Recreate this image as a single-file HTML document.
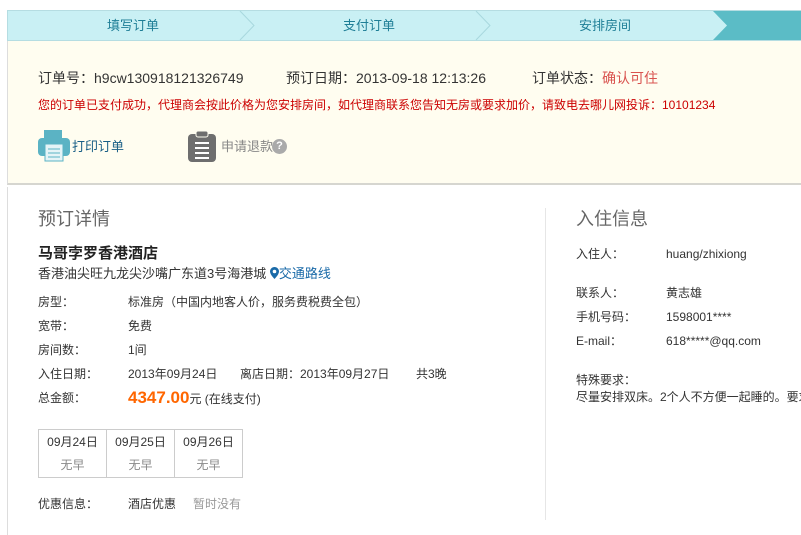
<!DOCTYPE html>
<html><head><meta charset="utf-8"><style>
*{margin:0;padding:0;box-sizing:border-box}
body{width:801px;height:535px;background:#fff;font-family:"Liberation Sans","Noto Sans CJK SC",sans-serif;font-size:12px;color:#333;position:relative;overflow:hidden}
.a{position:absolute;white-space:nowrap;line-height:16px}
</style></head><body>
<div class="a" style="left:7px;top:10px;width:794px;height:31px;background:#c9f0f4;border:1px solid #b5dde2;border-right:none"></div>
<svg class="a" style="left:0;top:10px" width="801" height="31">
<polyline points="240,1 254,15.5 240,30" fill="none" stroke="#a8d8de" stroke-width="1"/>
<polyline points="476,1 490,15.5 476,30" fill="none" stroke="#a8d8de" stroke-width="1"/>
<polygon points="713,1 801,1 801,30 713,30 727,15.5" fill="#5bbcc6"/>
</svg>
<div class="a" style="left:107px;top:18px;color:#1e7e96;font-size:13px">填写订单</div>
<div class="a" style="left:343px;top:18px;color:#1e7e96;font-size:13px">支付订单</div>
<div class="a" style="left:579px;top:18px;color:#1e7e96;font-size:13px">安排房间</div>
<div class="a" style="left:7px;top:41px;width:794px;height:144px;background:#fffdf0;border-left:1px solid #ddd;border-bottom:2px solid #d6d6d0"></div>
<div class="a" style="left:38px;top:70px;font-size:14px">订单号：h9cw130918121326749</div>
<div class="a" style="left:286px;top:70px;font-size:14px">预订日期：2013-09-18 12:13:26</div>
<div class="a" style="left:532px;top:70px;font-size:14px">订单状态：<span style="color:#d9534f">确认可住</span></div>
<div class="a" style="left:38px;top:97px;font-size:12px;color:#c00">您的订单已支付成功，代理商会按此价格为您安排房间，如代理商联系您告知无房或要求加价，请致电去哪儿网投诉：10101234</div>
<svg class="a" style="left:38px;top:129px" width="32" height="33"><rect x="6" y="1" width="18" height="8" fill="#5bb3c4"/><rect x="0" y="9" width="32" height="18" rx="4" fill="#5bb3c4"/><rect x="7" y="15" width="18" height="17" fill="#e5f4f7" stroke="#5bb3c4"/><line x1="10" y1="20" x2="22" y2="20" stroke="#5bb3c4"/><line x1="10" y1="24" x2="22" y2="24" stroke="#5bb3c4"/><line x1="10" y1="28" x2="22" y2="28" stroke="#5bb3c4"/></svg>
<div class="a" style="left:72px;top:139px;color:#1a5f86;font-size:13px">打印订单</div>
<svg class="a" style="left:188px;top:130px" width="28" height="32"><rect x="0" y="4" width="28" height="28" rx="4" fill="#6e6e6e"/><rect x="8" y="1" width="12" height="6" rx="2" fill="#6e6e6e" stroke="#fffdf0"/><g stroke="#fff" stroke-width="2"><line x1="7" y1="13" x2="21" y2="13"/><line x1="7" y1="18" x2="21" y2="18"/><line x1="7" y1="23" x2="21" y2="23"/><line x1="7" y1="28" x2="21" y2="28"/></g></svg>
<div class="a" style="left:221px;top:139px;color:#888;font-size:13px">申请退款</div>
<div class="a" style="left:272px;top:139px;width:15px;height:15px;border-radius:50%;background:#aaa;color:#fff;font-size:11px;font-weight:bold;text-align:center;line-height:15px">?</div>
<div class="a" style="left:7px;top:187px;width:1px;height:348px;background:#ddd"></div>
<div class="a" style="left:545px;top:208px;width:1px;height:312px;background:#e6e6e6"></div>
<div class="a" style="left:38px;top:208px;font-size:18px;line-height:22px;color:#666">预订详情</div>
<div class="a" style="left:38px;top:246px;font-size:15px;font-weight:bold;color:#222">马哥孛罗香港酒店</div>
<div class="a" style="left:38px;top:266px;font-size:13px">香港油尖旺九龙尖沙嘴广东道3号海港城 <svg width="9" height="12" viewBox="0 0 9 12" style="vertical-align:-1px"><path d="M4.5 0C2 0 0 2 0 4.5 0 7.5 4.5 12 4.5 12S9 7.5 9 4.5C9 2 7 0 4.5 0z" fill="#1a6aa8"/><circle cx="4.5" cy="4.5" r="1.8" fill="#fff"/></svg><span style="color:#1a6aa8">交通路线</span></div>
<div class="a" style="left:38px;top:294px">房型：</div><div class="a" style="left:128px;top:294px">标准房（中国内地客人价，服务费税费全包）</div>
<div class="a" style="left:38px;top:318px">宽带：</div><div class="a" style="left:128px;top:318px">免费</div>
<div class="a" style="left:38px;top:342px">房间数：</div><div class="a" style="left:128px;top:342px">1间</div>
<div class="a" style="left:38px;top:366px">入住日期：</div><div class="a" style="left:128px;top:366px">2013年09月24日</div><div class="a" style="left:240px;top:366px">离店日期：2013年09月27日</div><div class="a" style="left:416px;top:366px">共3晚</div>
<div class="a" style="left:38px;top:390px">总金额：</div><div class="a" style="left:128px;top:388px;line-height:20px"><span style="color:#f60;font-size:17px;font-weight:bold">4347.00</span>元 (在线支付)</div>
<table class="a" style="left:38px;top:429px;border-collapse:collapse;font-size:12px;text-align:center">
<tr><td style="border:1px solid #ccc;width:68px;height:24px;border-bottom:none">09月24日</td><td style="border:1px solid #ccc;width:68px;border-bottom:none">09月25日</td><td style="border:1px solid #ccc;width:68px;border-bottom:none">09月26日</td></tr>
<tr><td style="border:1px solid #ccc;border-top:none;height:24px;color:#888">无早</td><td style="border:1px solid #ccc;border-top:none;color:#888">无早</td><td style="border:1px solid #ccc;border-top:none;color:#888">无早</td></tr></table>
<div class="a" style="left:38px;top:496px">优惠信息：</div><div class="a" style="left:128px;top:496px">酒店优惠</div><div class="a" style="left:193px;top:496px;color:#999">暂时没有</div>
<div class="a" style="left:576px;top:208px;font-size:18px;line-height:22px;color:#666">入住信息</div>
<div class="a" style="left:576px;top:246px">入住人：</div><div class="a" style="left:666px;top:246px">huang/zhixiong</div>
<div class="a" style="left:576px;top:285px">联系人：</div><div class="a" style="left:666px;top:285px">黄志雄</div>
<div class="a" style="left:576px;top:309px">手机号码：</div><div class="a" style="left:666px;top:309px">1598001****</div>
<div class="a" style="left:576px;top:333px">E-mail：</div><div class="a" style="left:666px;top:333px">618*****@qq.com</div>
<div class="a" style="left:576px;top:372px">特殊要求：</div>
<div class="a" style="left:576px;top:389px">尽量安排双床。2个人不方便一起睡的。要求</div>
</body></html>
